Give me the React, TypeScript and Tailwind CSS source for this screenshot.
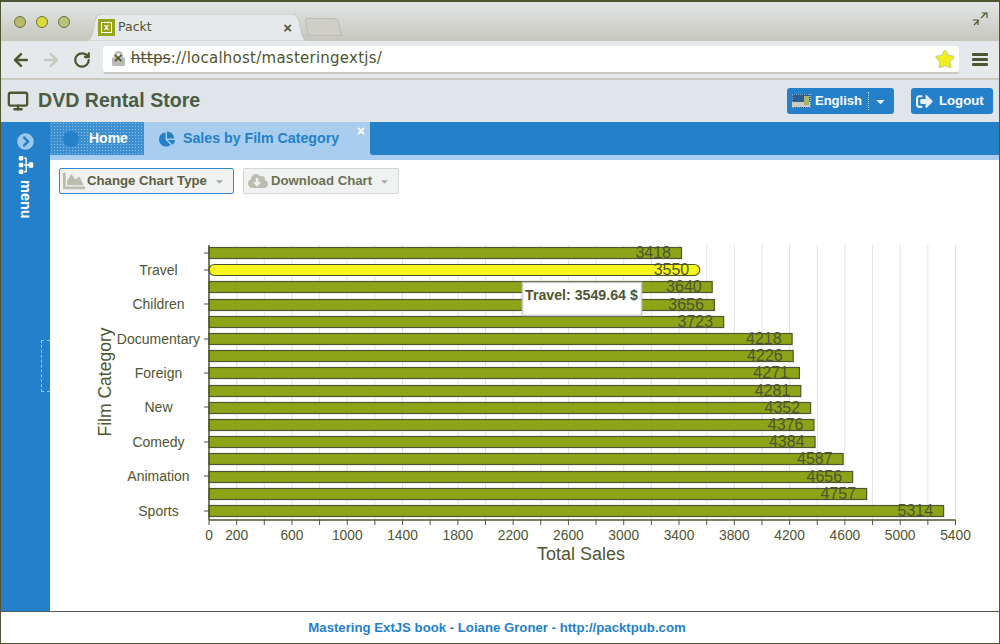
import { ArrowLeft, ArrowRight, RotateCw, Monitor } from 'lucide-react';
import { FaChartArea, FaChartPie, FaCloudDownloadAlt, FaSignOutAlt, FaSitemap, FaChevronCircleRight, FaCaretDown, FaStar, FaLock } from 'react-icons/fa';

const sales = [3418, 3550, 3640, 3656, 3723, 4218, 4226, 4271, 4281, 4352, 4376, 4384, 4587, 4656, 4757, 5314];
const categories = [
  { name: 'Travel', y: 270 },
  { name: 'Children', y: 304 },
  { name: 'Documentary', y: 339 },
  { name: 'Foreign', y: 373 },
  { name: 'New', y: 407 },
  { name: 'Comedy', y: 442 },
  { name: 'Animation', y: 476 },
  { name: 'Sports', y: 511 },
];
const xLabels = [0, 200, 600, 1000, 1400, 1800, 2200, 2600, 3000, 3400, 3800, 4200, 4600, 5000, 5400];
const gridValues = Array.from({ length: 28 }, (_, i) => i * 200);

const toX = (v: number) => 209 + v * 0.13824;
const ink = '#4f5532';

function SalesChart() {
  return (
    <svg width="950" height="405" className="block" fontFamily="'Liberation Sans', Arial, sans-serif">
      {/* page coordinates, chart box starts at 50,200 */}
      <g transform="translate(-50,-200)">
        {gridValues.map((v) => (
          <line key={v} x1={toX(v)} x2={toX(v)} y1={245} y2={520} stroke="#dfe4e8" strokeWidth="1" />
        ))}
        {sales.map((v, i) => {
          const top = Math.round(247 + i * 17.2) + 0.5;
          const active = i === 1;
          return (
            <g key={v}>
              <rect
                x={209}
                y={top}
                width={toX(v) - 209}
                height={11}
                rx={active ? 5.5 : 0}
                fill={active ? '#f8f81c' : '#8da418'}
                stroke={ink}
                strokeWidth="1.2"
              />
              <text x={toX(v) - 10.5} y={top + 10.5} textAnchor="end" fontSize="16" fill={ink}>
                {v}
              </text>
            </g>
          );
        })}
        <line x1={209} x2={209} y1={245} y2={520} stroke={ink} strokeWidth="1.5" />
        <line x1={209} x2={955.5} y1={520} y2={520} stroke={ink} strokeWidth="1.5" />
        {gridValues.map((v) => (
          <line key={v} x1={toX(v)} x2={toX(v)} y1={520} y2={525} stroke={ink} strokeWidth="1" />
        ))}
        <line x1={204} x2={209} y1={253} y2={253} stroke={ink} strokeWidth="1" />
        {categories.map((c) => (
          <g key={c.name}>
            <line x1={204} x2={209} y1={c.y} y2={c.y} stroke={ink} strokeWidth="1" />
            <text x={158.5} y={c.y + 4.5} textAnchor="middle" fontSize="14" fill={ink}>
              {c.name}
            </text>
          </g>
        ))}
        {xLabels.map((v) => (
          <text key={v} x={toX(v)} y={540} textAnchor="middle" fontSize="13.8" fill={ink}>
            {v}
          </text>
        ))}
        <text x={581} y={560} textAnchor="middle" fontSize="18" fill={ink}>
          Total Sales
        </text>
        <text x={0} y={0} transform="translate(111,382) rotate(-90)" textAnchor="middle" fontSize="17.5" fill={ink}>
          Film Category
        </text>
        <rect x={522.5} y={282.5} width={119} height={33} fill="#ffffff" stroke="#c8ccce" strokeWidth="1.5" />
        <text x={525} y={300} fontSize="14.2" fontWeight="bold" fill={ink}>
          Travel: 3549.64 $
        </text>
      </g>
    </svg>
  );
}

export default function App() {
  return (
    <div className="relative w-[1000px] h-[644px] flex flex-col overflow-hidden border border-t-2 border-[#4f5532] bg-white font-['Liberation_Sans',Arial,sans-serif] text-[#4f5532]">
      {/* browser tab strip */}
      <div className="h-[39px] shrink-0 flex items-end bg-gradient-to-b from-[#e3e6e8] to-[#c6c6ba]">
        <div className="flex items-center gap-[10px] pl-[13px] pb-[13px] w-[84px]">
          <span className="w-3 h-3 rounded-full border border-[#6b7040] bg-[#b9bb6a]" />
          <span className="w-3 h-3 rounded-full border border-[#6b7040] bg-[#d9dc3c]" />
          <span className="w-3 h-3 rounded-full border border-[#6b7040] bg-[#b9c27a]" />
        </div>
        <div className="relative w-[224px] h-[27px] flex items-center pl-[13px] pr-[17px]">
          <svg width="224" height="27" className="absolute inset-0">
            <path d="M0 27C6 27 7 22 9 12C10 4 12 0 18 0H206C212 0 214 4 215 12C217 22 218 27 224 27Z" fill="#e6e9eb" stroke="#c6c6ba" />
          </svg>
          <span className="relative w-[17px] h-[17px] bg-[#96a51c] flex items-center justify-center">
            <span className="w-[11px] h-[11px] border border-white text-white text-[9px] leading-[9px] text-center font-bold">x</span>
          </span>
          <span className="relative ml-[3px] text-[12.5px] font-['DejaVu_Sans',sans-serif] text-[#4f5532] flex-1">Packt</span>
          <span className="relative text-[15px] font-bold leading-none">×</span>
        </div>
        <div className="ml-[-3px] w-[34px] h-[18px] mb-[5px] border border-[#bdbdb0] rounded-t-[4px] skew-x-12 bg-[#cfcfc6]" />
        <svg width="16" height="16" viewBox="0 0 16 16" className="ml-auto mr-[11px] mb-[14px]" fill="none" stroke="#4f5532" strokeWidth="1.2">
          <path d="M9 7 14 2M10 2h5v5" />
          <path d="M7 9 2 14M1 9h5v5" />
        </svg>
      </div>

      {/* browser toolbar */}
      <div className="h-[39px] shrink-0 flex items-center border-b-2 border-[#c8c8be] bg-[#e6e9eb] pl-[10px] pr-[11px]">
        <ArrowLeft size={20} strokeWidth={3} className="text-[#4f5532]" />
        <ArrowRight size={20} strokeWidth={3} className="ml-[10px] text-[#c6c8c0]" />
        <RotateCw size={18} strokeWidth={3} className="ml-[12px] text-[#4f5532]" />
        <div className="ml-[12px] w-[858px] h-[28px] flex items-center bg-white rounded-[3px] border-b-2 border-[#c8c8be] pl-[8px] pr-[4px]">
          <span className="relative w-[16px] h-[16px]">
            <FaLock size={15} className="text-[#b9bbb4]" />
            <span className="absolute left-[3px] top-[-3px] text-[15px] font-bold text-[#4f5532] leading-[20px]">×</span>
          </span>
          <span className="ml-[4px] text-[15px] tracking-[0.25px] font-['DejaVu_Sans',sans-serif] text-[#4f5532] whitespace-nowrap">
            <span className="line-through">https</span>://localhost/masteringextjs/
          </span>
          <FaStar size={20} className="ml-auto text-[#eef01e] stroke-[#b5b7ac] stroke-[20]" />
        </div>
        <div className="ml-[13px] flex flex-col gap-[2px]">
          <span className="block w-[16px] h-[3px] bg-[#4f5532] rounded-[1px]" />
          <span className="block w-[16px] h-[3px] bg-[#4f5532] rounded-[1px]" />
          <span className="block w-[16px] h-[3px] bg-[#4f5532] rounded-[1px]" />
        </div>
      </div>

      {/* app header */}
      <div className="h-[42px] shrink-0 flex items-center bg-[#e0e5e9] pl-[6px] pr-[6px]">
        <Monitor size={22} strokeWidth={2.5} className="text-[#4f5532]" />
        <span className="ml-[9px] text-[19.6px] font-bold text-[#4b5c45]">DVD Rental Store</span>
        <div className="ml-auto h-[26px] w-[107px] flex items-center rounded-[3px] bg-[#2481c9] text-white text-[13px] font-bold pl-[5px]">
          <svg width="19" height="14" viewBox="0 0 19 14">
            <rect x="0" y="0" width="18" height="14" fill="#2a5f94" stroke="#dde3e6" strokeDasharray="1 1" />
            <rect x="0" y="8" width="18" height="5" fill="#c9ccc0" />
            <rect x="12" y="2" width="5" height="9" fill="#a9b46a" />
          </svg>
          <span className="ml-[4px]">English</span>
          <span className="ml-[6px] h-[18px] border-l border-dotted border-[#bcd7ee]" />
          <FaCaretDown size={13} className="ml-[5px] text-[#e6f0f8]" />
        </div>
        <div className="ml-[17px] h-[26px] w-[82px] flex items-center rounded-[3px] bg-[#2481c9] text-white text-[13.2px] font-bold pl-[5px]">
          <FaSignOutAlt size={17} className="text-[#e6f0f8]" />
          <span className="ml-[6px]">Logout</span>
        </div>
      </div>

      {/* app body */}
      <div className="flex-1 min-h-0 flex">
        <div className="relative w-[49px] shrink-0 bg-[#2481c9] flex flex-col items-center pt-[11px] text-white">
          <FaChevronCircleRight size={17} className="text-[#9cc8ec]" />
          <FaSitemap size={18} className="mt-[6px] rotate-90" />
          <span className="mt-[6px] text-[14.5px] font-bold [writing-mode:vertical-rl]">menu</span>
          <div className="absolute right-0 top-[218px] w-[9px] h-[52px] border border-dashed border-[#9cc8ec] border-r-0" />
        </div>
        <div className="flex-1 min-w-0 flex flex-col">
          {/* tab bar */}
          <div className="h-[38px] shrink-0 flex bg-[#a8cdee]">
            <div className="w-[94px] h-[33px] flex items-center bg-[#3d8fd0] bg-[radial-gradient(#8fc0e8_0.6px,transparent_0.6px)] bg-[length:3px_3px] text-white text-[14px] font-bold pl-[13px]">
              <span className="w-[16px] h-[16px] rounded-full bg-[#2481c9]" />
              <span className="ml-[10px]">Home</span>
            </div>
            <div className="relative w-[226px] h-[34px] flex items-center bg-[#a8cdee] text-[#2481c9] text-[14.2px] font-bold pl-[15px]">
              <FaChartPie size={16} />
              <span className="ml-[8px]">Sales by Film Category</span>
              <span className="absolute right-[5px] top-0 text-[14px] leading-[18px] text-white">×</span>
            </div>
            <div className="flex-1 h-[33px] bg-[#2481c9] rounded-bl-[3px]" />
          </div>
          {/* chart toolbar */}
          <div className="h-[40px] shrink-0 flex items-start gap-[9px] pl-[9px] pt-[8px] text-[13.2px] font-bold">
            <div className="w-[175px] h-[26px] flex items-center rounded-[2px] border border-[#2f8ad6] bg-[#f0f2f2] pl-[3px] text-[#5b6042]">
              <FaChartArea size={22} className="text-[#bcbcb0]" />
              <span className="ml-[2px]">Change Chart Type</span>
              <FaCaretDown size={11} className="ml-[7px] text-[#a9ab9c]" />
            </div>
            <div className="w-[156px] h-[26px] flex items-center rounded-[2px] border border-[#d5d8d8] bg-[#f0f2f2] pl-[4px] text-[#6c7055]">
              <FaCloudDownloadAlt size={20} className="text-[#bcbcb0]" />
              <span className="ml-[3px]">Download Chart</span>
              <FaCaretDown size={11} className="ml-[7px] text-[#a9ab9c]" />
            </div>
          </div>
          <SalesChart />
        </div>
      </div>

      {/* footer */}
      <div className="h-[32px] shrink-0 flex items-center justify-center border-t border-[#4f5c55] bg-white pr-[6px] text-[13.2px] font-bold text-[#2481c9]">
        Mastering ExtJS book - Loiane Groner - http://packtpub.com
      </div>
    </div>
  );
}
